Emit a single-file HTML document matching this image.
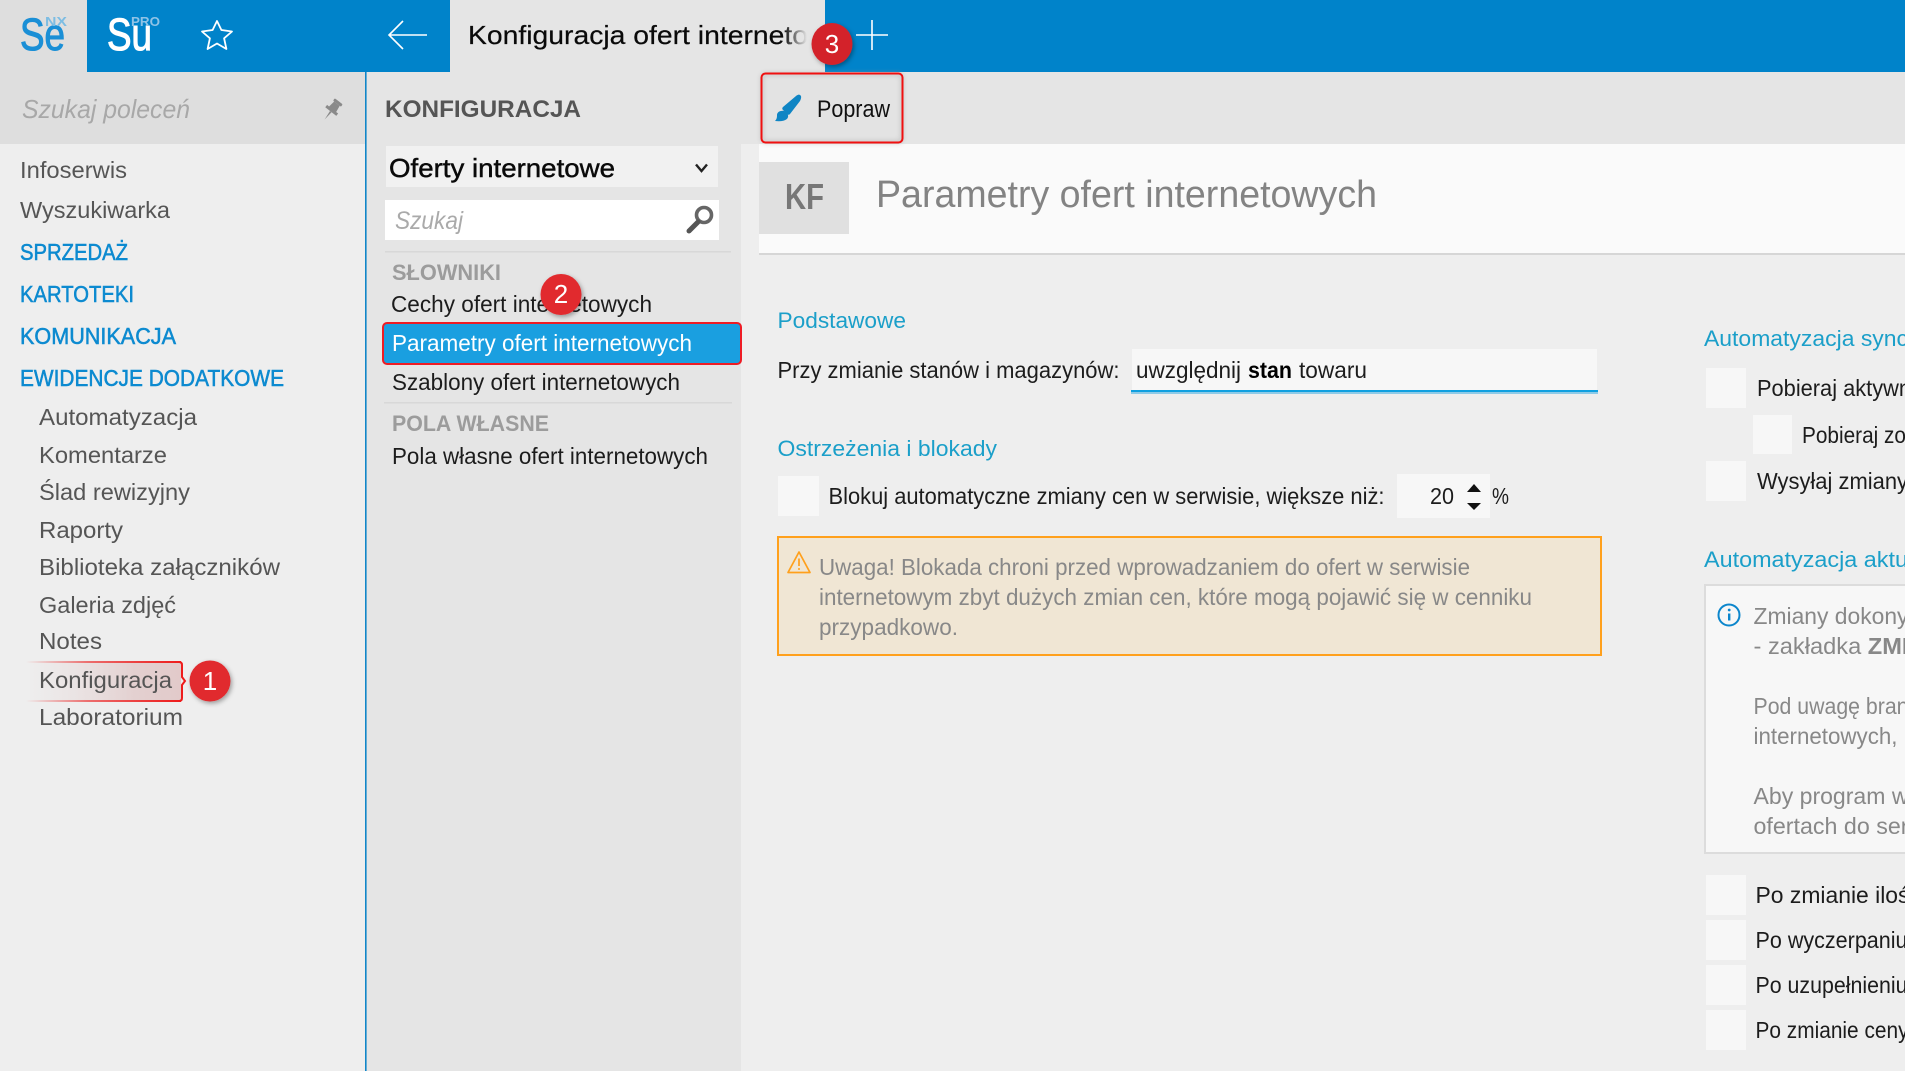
<!DOCTYPE html>
<html lang="pl">
<head>
<meta charset="utf-8">
<title>Konfiguracja ofert internetowych</title>
<style>
html,body{margin:0;padding:0;width:1905px;height:1071px;overflow:hidden;background:#eee}
svg{display:block;position:absolute;left:0;top:0}
text{font-family:"Liberation Sans",sans-serif;white-space:pre}
.m{font-size:23.5px;fill:#555}
.h{font-size:23px;fill:#0c8ad0;stroke:#0c8ad0;stroke-width:.55}
.k{font-size:23.5px;fill:#1c1c1c}
.g{font-size:23px;fill:#888}
.t{font-size:22.5px;fill:#1b9fc9}
.s{font-size:22px;font-weight:bold;fill:#9c9c9c}
.b{font-size:26px;fill:#fff;text-anchor:middle}
.cb{fill:#f7f7f7}
</style>
</head>
<body>
<svg width="1905" height="1071" viewBox="0 0 1905 1071" xmlns="http://www.w3.org/2000/svg">
<defs>
<linearGradient id="fade" x1="0" x2="1" y1="0" y2="0"><stop offset="0" stop-color="#e5e5e5" stop-opacity="0"/><stop offset="1" stop-color="#e5e5e5"/></linearGradient>
<linearGradient id="hl" x1="0" x2="1" y1="0" y2="0"><stop offset="0" stop-color="#e8dcdc" stop-opacity="0"/><stop offset=".7" stop-color="#e3d0d0"/><stop offset="1" stop-color="#e2caca"/></linearGradient>
<linearGradient id="hlb" x1="0" x2="1" y1="0" y2="0"><stop offset="0" stop-color="#ee2222" stop-opacity="0"/><stop offset=".4" stop-color="#ee2222" stop-opacity=".6"/><stop offset="1" stop-color="#ee1c1c"/></linearGradient>
<filter id="sh" x="-30%" y="-30%" width="170%" height="170%"><feDropShadow dx="1.5" dy="2" stdDeviation="2.5" flood-color="#000" flood-opacity=".35"/></filter>
<filter id="sh2" x="-10%" y="-10%" width="120%" height="120%"><feGaussianBlur stdDeviation="2.5"/></filter>
</defs>

<!-- backgrounds -->
<rect x="0" y="0" width="1905" height="1071" fill="#eeeeee"/>
<rect x="0" y="0" width="87" height="72" fill="#dedede"/>
<rect x="87" y="0" width="1818" height="72" fill="#0083ca"/>
<rect x="0" y="72" width="365" height="72" fill="#dedede"/>
<rect x="365" y="72" width="1540" height="72" fill="#e5e5e5"/>
<rect x="366" y="144" width="375" height="927" fill="#e5e5e5"/>
<rect x="365" y="72" width="1.6" height="999" fill="#1186c8"/>
<rect x="759" y="144" width="1146" height="109" fill="#fafafa"/>
<rect x="759" y="253" width="1146" height="2" fill="#d6d6d6"/>
<rect x="759" y="162" width="90" height="72" fill="#e0e0e0"/>

<!-- logos -->
<text x="20" y="50" font-size="45" fill="#1a8fd6" stroke="#1a8fd6" stroke-width="1.1" textLength="45" lengthAdjust="spacingAndGlyphs">Se</text>
<text x="45" y="26" font-size="12.5" fill="#7dbde3" textLength="22" lengthAdjust="spacingAndGlyphs" font-weight="bold">NX</text>
<text x="107" y="50" font-size="45" fill="#fff" stroke="#fff" stroke-width="1.1" textLength="45" lengthAdjust="spacingAndGlyphs">Su</text>
<text x="131" y="26" font-size="12.5" fill="#8fc3e6" textLength="29" lengthAdjust="spacingAndGlyphs" font-weight="bold">PRO</text>
<path d="M217 21L221.4 30L232 31.5L224.1 38.3L226.4 49L217 43.5L207.6 49L209.9 38.3L202 31.5L212.6 30Z" fill="none" stroke="#fff" stroke-width="1.8" stroke-linejoin="round"/>
<path d="M427 35H389M403 21L389 35L403 49" fill="none" stroke="#fff" stroke-width="1.6"/>

<!-- tab -->
<rect x="450" y="0" width="375" height="72" fill="#e5e5e5"/>
<text x="468" y="44" font-size="26" fill="#0a0a0a" stroke="#0a0a0a" stroke-width=".2" textLength="340" lengthAdjust="spacingAndGlyphs">Konfiguracja ofert interneto</text>
<rect x="783" y="0" width="24" height="72" fill="url(#fade)"/>
<rect x="807" y="0" width="18" height="72" fill="#e5e5e5"/>
<path d="M872 20V50M856 35H888" fill="none" stroke="#fff" stroke-width="1.6"/>

<!-- toolbar button -->
<rect x="761" y="73" width="142" height="70" rx="5" fill="#e3e3e3"/>
<rect x="762" y="74" width="140" height="68" rx="4" fill="none" stroke="#999" stroke-width="3" opacity=".45" filter="url(#sh2)"/>
<path d="M800 95c2 1 1 4 0 6L790 114c-1 1-2 1-3 0L783 110c-1-1-1-2 0-3L796 96c1-1 3-2 4-1z" fill="#0f85c4"/>
<path d="M781 111c3-1 6 1 7 4c1 4-3 7-13 6c2-2 2-4 2-6c0-2 2-4 4-4z" fill="#0f85c4"/>
<text x="817" y="117" font-size="24" fill="#111" textLength="73" lengthAdjust="spacingAndGlyphs">Popraw</text>
<rect x="761.5" y="73.5" width="141" height="69" rx="4" fill="none" stroke="#f01010" stroke-width="2"/>

<!-- search commands -->
<text x="22" y="118" font-size="26" font-style="italic" fill="#a8a8a8" textLength="168" lengthAdjust="spacingAndGlyphs">Szukaj poleceń</text>
<g transform="translate(332 110) rotate(38)" fill="#8a8a8a">
<rect x="-5" y="-11" width="10" height="3" rx="1"/>
<path d="M-3.5-8H3.5L4.5-1H7V2H-7V-1H-4.5Z"/>
<path d="M-1 2H1L0 12Z"/>
</g>

<!-- left menu -->
<text class="m" x="20" y="178" textLength="107" lengthAdjust="spacingAndGlyphs">Infoserwis</text>
<text class="m" x="20" y="218" textLength="150" lengthAdjust="spacingAndGlyphs">Wyszukiwarka</text>
<text class="h" x="20" y="260" textLength="108" lengthAdjust="spacingAndGlyphs">SPRZEDAŻ</text>
<text class="h" x="20" y="302" textLength="114" lengthAdjust="spacingAndGlyphs">KARTOTEKI</text>
<text class="h" x="20" y="344" textLength="156" lengthAdjust="spacingAndGlyphs">KOMUNIKACJA</text>
<text class="h" x="20" y="386" textLength="264" lengthAdjust="spacingAndGlyphs">EWIDENCJE DODATKOWE</text>
<text class="m" x="39" y="425" textLength="158" lengthAdjust="spacingAndGlyphs">Automatyzacja</text>
<text class="m" x="39" y="463" textLength="128" lengthAdjust="spacingAndGlyphs">Komentarze</text>
<text class="m" x="39" y="500" textLength="151" lengthAdjust="spacingAndGlyphs">Ślad rewizyjny</text>
<text class="m" x="39" y="538" textLength="84" lengthAdjust="spacingAndGlyphs">Raporty</text>
<text class="m" x="39" y="575" textLength="241" lengthAdjust="spacingAndGlyphs">Biblioteka załączników</text>
<text class="m" x="39" y="613" textLength="137" lengthAdjust="spacingAndGlyphs">Galeria zdjęć</text>
<text class="m" x="39" y="649" textLength="63" lengthAdjust="spacingAndGlyphs">Notes</text>
<rect x="26" y="661" width="155" height="41" fill="url(#hl)"/>
<rect x="26" y="661" width="155" height="2" fill="url(#hlb)"/>
<rect x="26" y="700" width="155" height="2" fill="url(#hlb)"/>
<path d="M179 662Q182 662 182 665V677L185 681L182 685V698Q182 701 179 701" fill="none" stroke="#ee1c1c" stroke-width="2"/>
<text class="m" x="39" y="688" textLength="133" lengthAdjust="spacingAndGlyphs">Konfiguracja</text>
<text class="m" x="39" y="725" textLength="144" lengthAdjust="spacingAndGlyphs">Laboratorium</text>

<!-- second column -->
<text x="385" y="117" font-size="24" font-weight="bold" fill="#555" textLength="196" lengthAdjust="spacingAndGlyphs">KONFIGURACJA</text>
<rect x="386" y="146" width="332" height="41" fill="#f1f1f1"/>
<text x="389" y="177" font-size="26" fill="#0a0a0a" stroke="#0a0a0a" stroke-width=".45" textLength="226" lengthAdjust="spacingAndGlyphs">Oferty internetowe</text>
<path d="M696 164.5L701.5 171L707 164.5" fill="none" stroke="#222" stroke-width="2.4"/>
<rect x="385" y="200" width="334" height="40" fill="#fff"/>
<text x="395" y="229" font-size="25" font-style="italic" fill="#aaa" textLength="68" lengthAdjust="spacingAndGlyphs">Szukaj</text>
<circle cx="704" cy="215" r="7.5" fill="none" stroke="#666" stroke-width="3.6"/>
<path d="M698 222L689 231" stroke="#555" stroke-width="5" stroke-linecap="round"/>
<rect x="385" y="251" width="346" height="1.5" fill="#d8d8d8"/>
<text class="s" x="392" y="280" textLength="109" lengthAdjust="spacingAndGlyphs">SŁOWNIKI</text>
<text class="k" x="391" y="312" textLength="261" lengthAdjust="spacingAndGlyphs">Cechy ofert internetowych</text>
<rect x="383" y="323" width="358" height="41" rx="4" fill="#1a9fe0" stroke="#ee1c24" stroke-width="2"/>
<text class="k" x="392" y="351" textLength="300" lengthAdjust="spacingAndGlyphs" style="fill:#fff">Parametry ofert internetowych</text>
<text class="k" x="392" y="390" textLength="288" lengthAdjust="spacingAndGlyphs">Szablony ofert internetowych</text>
<rect x="384" y="402" width="348" height="1.5" fill="#d8d8d8"/>
<text class="s" x="392" y="431" textLength="157" lengthAdjust="spacingAndGlyphs">POLA WŁASNE</text>
<text class="k" x="392" y="464" textLength="316" lengthAdjust="spacingAndGlyphs">Pola własne ofert internetowych</text>

<!-- header -->
<text x="785" y="209" font-size="36" font-weight="bold" fill="#777" textLength="39" lengthAdjust="spacingAndGlyphs">KF</text>
<text x="876" y="207" font-size="38" fill="#838383" textLength="501" lengthAdjust="spacingAndGlyphs">Parametry ofert internetowych</text>

<!-- main left -->
<text class="t" x="777.5" y="328" textLength="128.5" lengthAdjust="spacingAndGlyphs">Podstawowe</text>
<text class="k" x="777.5" y="378" textLength="342" lengthAdjust="spacingAndGlyphs">Przy zmianie stanów i magazynów:</text>
<rect x="1132" y="349" width="465" height="41" fill="#f7f7f7"/>
<rect x="1131" y="390" width="467" height="2" fill="#10a0e0"/>
<rect x="1131" y="392" width="467" height="2" fill="#8ecbe8"/>
<text class="k" x="1136" y="378" textLength="105" lengthAdjust="spacingAndGlyphs">uwzględnij</text>
<text class="k" x="1248" y="378" font-weight="bold" textLength="44" lengthAdjust="spacingAndGlyphs" style="fill:#000">stan</text>
<text class="k" x="1299" y="378" textLength="68" lengthAdjust="spacingAndGlyphs">towaru</text>
<text class="t" x="777.5" y="456" textLength="219.5" lengthAdjust="spacingAndGlyphs">Ostrzeżenia i blokady</text>
<rect class="cb" x="778" y="476" width="41" height="40"/>
<text class="k" x="828.5" y="504" textLength="556" lengthAdjust="spacingAndGlyphs">Blokuj automatyczne zmiany cen w serwisie, większe niż:</text>
<rect class="cb" x="1397" y="474" width="93" height="44"/>
<text class="k" x="1430" y="504" textLength="24" lengthAdjust="spacingAndGlyphs">20</text>
<path d="M1474 484L1481 492H1467Z" fill="#111"/>
<path d="M1474 510L1481 503H1467Z" fill="#111"/>
<text class="k" x="1492" y="504" textLength="17" lengthAdjust="spacingAndGlyphs">%</text>

<!-- warning -->
<rect x="778" y="537" width="823" height="118" fill="#f0e6d4" stroke="#ffa01c" stroke-width="2"/>
<path d="M799 552L810 572.5H788Z" fill="none" stroke="#ffa01c" stroke-width="1.7" stroke-linejoin="round"/>
<path d="M799 558.5V566" stroke="#ffa01c" stroke-width="1.7"/><circle cx="799" cy="569" r="1" fill="#ffa01c"/>
<text class="g" x="819" y="575" textLength="651" lengthAdjust="spacingAndGlyphs">Uwaga! Blokada chroni przed wprowadzaniem do ofert w serwisie</text>
<text class="g" x="819" y="605" textLength="713" lengthAdjust="spacingAndGlyphs">internetowym zbyt dużych zmian cen, które mogą pojawić się w cenniku</text>
<text class="g" x="819" y="635" textLength="139" lengthAdjust="spacingAndGlyphs">przypadkowo.</text>

<!-- main right -->
<text class="t" x="1704" y="346" textLength="204" lengthAdjust="spacingAndGlyphs">Automatyzacja sync</text>
<rect class="cb" x="1706" y="368" width="40" height="40"/>
<text class="k" x="1757" y="396" textLength="154" lengthAdjust="spacingAndGlyphs">Pobieraj aktywn</text>
<rect class="cb" x="1753" y="415" width="39" height="39"/>
<text class="k" x="1802" y="443" textLength="104" lengthAdjust="spacingAndGlyphs">Pobieraj zo</text>
<rect class="cb" x="1706" y="461" width="40" height="40"/>
<text class="k" x="1757" y="489" textLength="151" lengthAdjust="spacingAndGlyphs">Wysyłaj zmiany</text>
<text class="t" x="1704" y="567" textLength="204" lengthAdjust="spacingAndGlyphs">Automatyzacja aktu</text>
<rect x="1705" y="585" width="210" height="268" fill="#f7f7f7" stroke="#dcdcdc" stroke-width="2"/>
<circle cx="1729" cy="615" r="10.5" fill="none" stroke="#0c86cc" stroke-width="2"/>
<rect x="1728" y="613.5" width="2.4" height="7" fill="#0c86cc"/><circle cx="1729.2" cy="610" r="1.4" fill="#0c86cc"/>
<text class="g" x="1753.5" y="624" textLength="155" lengthAdjust="spacingAndGlyphs">Zmiany dokony</text>
<text class="g" x="1753.5" y="654" textLength="155" lengthAdjust="spacingAndGlyphs">- zakładka <tspan font-weight="bold">ZMI</tspan></text>
<text class="g" x="1753.5" y="714" textLength="155" lengthAdjust="spacingAndGlyphs">Pod uwagę bran</text>
<text class="g" x="1753.5" y="744" textLength="144" lengthAdjust="spacingAndGlyphs">internetowych,</text>
<text class="g" x="1753.5" y="804" textLength="155" lengthAdjust="spacingAndGlyphs">Aby program w</text>
<text class="g" x="1753.5" y="834" textLength="155" lengthAdjust="spacingAndGlyphs">ofertach do ser</text>
<rect class="cb" x="1706" y="875" width="40" height="40"/>
<text class="k" x="1755.5" y="903" textLength="154" lengthAdjust="spacingAndGlyphs">Po zmianie iloś</text>
<rect class="cb" x="1706" y="920" width="40" height="40"/>
<text class="k" x="1755.5" y="948" textLength="152" lengthAdjust="spacingAndGlyphs">Po wyczerpaniu</text>
<rect class="cb" x="1706" y="965" width="40" height="40"/>
<text class="k" x="1755.5" y="993" textLength="152" lengthAdjust="spacingAndGlyphs">Po uzupełnieniu</text>
<rect class="cb" x="1706" y="1010" width="40" height="40"/>
<text class="k" x="1755.5" y="1038" textLength="153" lengthAdjust="spacingAndGlyphs">Po zmianie ceny</text>

<!-- numbered badges -->
<g filter="url(#sh)">
<ellipse cx="210" cy="681" rx="20.5" ry="20.5" fill="#e12a2e"/>
<ellipse cx="561" cy="294.5" rx="20.5" ry="20.5" fill="#e12a2e"/>
<ellipse cx="832" cy="44" rx="20.5" ry="21" fill="#d3242c"/>
</g>
<text class="b" x="210" y="690">1</text>
<text class="b" x="561" y="303">2</text>
<text class="b" x="832" y="53">3</text>
</svg>
</body>
</html>
